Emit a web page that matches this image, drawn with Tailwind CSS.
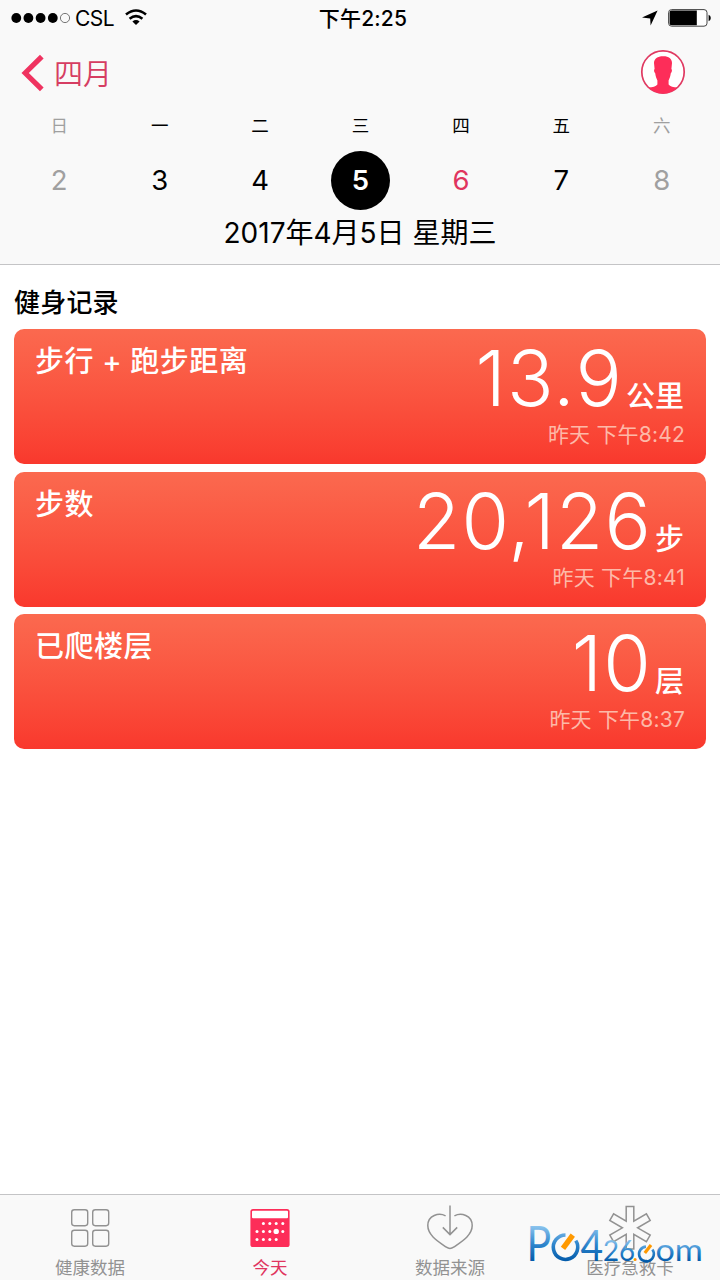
<!DOCTYPE html>
<html lang="zh-CN">
<head>
    <meta charset="UTF-8">
    <meta name="viewport" content="width=device-width, initial-scale=1.0">
    <title>健康</title>
    <script src="https://cdn.jsdelivr.net/npm/@tailwindcss/browser@4"></script>
</head>
<body class="bg-white font-['Inter','Noto_Sans_CJK_SC',sans-serif] text-black">
<div class="w-[720px] h-[1280px] flex flex-col overflow-hidden">

  <header class="h-[265px] bg-[#f9f9f9] border-b border-[#c4c4c6] flex flex-col shrink-0">
    <!-- status bar -->
    <div class="h-9 grid grid-cols-3 items-center pl-[11px] pr-[9px]">
      <div class="flex items-center">
        <svg class="w-[60px] h-3" viewBox="0 0 60 12">
          <circle cx="5.3" cy="6" r="4.9"/>
          <circle cx="17.4" cy="6" r="4.9"/>
          <circle cx="29.6" cy="6" r="4.9"/>
          <circle cx="41.8" cy="6" r="4.9"/>
          <circle cx="54" cy="6" r="4.6" fill="none" stroke="#555" stroke-width="0.8"/>
        </svg>
        <span class="text-[21px] leading-8 ml-1 pt-0.5 tracking-[-0.5px]">CSL</span>
        <svg class="w-[22px] h-4 ml-[11px] -mt-0.5" viewBox="0 0 22 16" fill="none" stroke="#000" stroke-width="2.6">
          <path d="M1 5.6 Q11 -2.6 21 5.6"/>
          <path d="M4.6 9.8 Q11 4.6 17.4 9.8"/>
          <path d="M7.4 12.4 Q11 9.6 14.6 12.4 L11 16 Z" fill="#000" stroke="none"/>
        </svg>
      </div>
      <div class="text-center text-[21px] leading-8 pt-px pl-1 font-medium tracking-[0.2px]">下午2:25</div>
      <div class="flex items-center justify-end">
        <svg class="w-4 h-4 mr-[10px]" viewBox="0 0 16 16"><path d="M15.6 0.4 L8.6 15.6 L8.2 8.6 L0 7.4 Z"/></svg>
        <svg class="w-[43px] h-[18px]" viewBox="0 0 43 18">
          <rect x="0.6" y="0.6" width="38.4" height="16.6" rx="3" fill="#fff" stroke="#444" stroke-width="1"/>
          <path d="M3.4 1.6 H28.8 V16.2 H3.4 Q1.6 16.2 1.6 14.4 V3.4 Q1.6 1.6 3.4 1.6 Z"/>
          <path d="M40.6 5.8 Q42.8 6.6 42.8 9 Q42.8 11.4 40.6 12.2 Z"/>
        </svg>
      </div>
    </div>

    <!-- nav bar -->
    <div class="h-[74px] flex items-center justify-between pl-[21px] pr-[34px]">
      <div class="flex items-center text-[#d63d62]">
        <svg class="w-[24px] h-[38px]" viewBox="0 0 24 38" fill="none" stroke="#ef3360" stroke-width="5.2"><path d="M20.8 2.6 L4.2 19 L20.8 35.4"/></svg>
        <span class="text-[29px] leading-10 ml-[9px] pt-[3px] font-[350]">四月</span>
      </div>
      <svg class="w-[46px] h-[46px] -mt-0.5" viewBox="0 0 46 46">
        <circle cx="23" cy="23" r="21.2" fill="#fff" stroke="#e03a62" stroke-width="1.7"/>
        <path fill="#fd2d59" d="M23 7.2 C28.4 7 32 9.6 32 14 L31.4 20 C32.4 20.6 32 23.6 30.8 24.2 C30.4 27.4 29.4 29.8 28.6 31.4 V35.4 C30 37.6 33.4 38 37.4 38.6 Q31 44.6 23 44.6 Q15 44.6 8.6 38.6 C12.6 38 16 37.6 17.4 35.4 V31.4 C16.6 29.8 15.6 27.4 15.2 24.2 C14 23.6 13.6 20.6 14.6 20 L14 14 C14 9.6 17.6 7.2 23 7.2 Z"/>
      </svg>
    </div>

    <!-- week -->
    <div class="grid grid-cols-7 pl-[9px] pr-[8px] text-center">
      <div class="text-[17.5px] leading-8 text-[#a0a0a0]">日</div>
      <div class="text-[17.5px] leading-8">一</div>
      <div class="text-[17.5px] leading-8">二</div>
      <div class="text-[17.5px] leading-8">三</div>
      <div class="text-[17.5px] leading-8">四</div>
      <div class="text-[17.5px] leading-8">五</div>
      <div class="text-[17.5px] leading-8 text-[#a0a0a0]">六</div>
    </div>
    <div class="grid grid-cols-7 pl-[9px] pr-[8px] mt-[9px] text-center text-[27.5px] leading-[58px]">
      <div class="text-[#a0a0a0]">2</div>
      <div>3</div>
      <div>4</div>
      <div class="w-[59px] h-[59px] rounded-full bg-black text-white font-semibold mx-auto">5</div>
      <div class="text-[#e0355f]">6</div>
      <div>7</div>
      <div class="text-[#a0a0a0]">8</div>
    </div>
    <div class="text-center text-[28px] leading-[46px]">2017年4月5日 星期三</div>
  </header>

  <main class="flex-1 px-[14px] pt-[18px]">
    <h1 class="text-[26px] leading-[40px] h-[38px] font-medium tracking-[0.2px]">健身记录</h1>
    <div class="flex flex-col gap-[7.5px] mt-2 text-white">

      <div class="h-[135px] rounded-[10px] bg-linear-to-b from-[#fb694f] to-[#f9382d] pl-[21px] pr-[21px] flex justify-between">
        <h2 class="text-[29px] leading-[42px] pt-[12px] font-medium tracking-[0.5px]">步行 + 跑步距离</h2>
        <div class="text-right">
          <div class="h-[91px] flex items-baseline justify-end">
            <span class="text-[77px] leading-[99px] font-light tracking-[1.2px]">13.9</span>
            <span class="relative top-px text-[29px] font-medium ml-[3px] mr-px">公里</span>
          </div>
          <p class="text-[21px] leading-[30px] text-[#fdb9a8] tracking-[0.2px]">昨天 下午8:42</p>
        </div>
      </div>

      <div class="h-[135px] rounded-[10px] bg-linear-to-b from-[#fb694f] to-[#f9382d] pl-[21px] pr-[21px] flex justify-between">
        <h2 class="text-[29px] leading-[42px] pt-[12px] font-medium tracking-[0.5px]">步数</h2>
        <div class="text-right">
          <div class="h-[91px] flex items-baseline justify-end">
            <span class="text-[77px] leading-[99px] font-light tracking-[1.2px]">20,126</span>
            <span class="relative top-px text-[29px] font-medium ml-[3px] mr-px">步</span>
          </div>
          <p class="text-[21px] leading-[30px] text-[#fdb9a8] tracking-[0.2px]">昨天 下午8:41</p>
        </div>
      </div>

      <div class="h-[135px] rounded-[10px] bg-linear-to-b from-[#fb694f] to-[#f9382d] pl-[21px] pr-[21px] flex justify-between">
        <h2 class="text-[29px] leading-[42px] pt-[12px] font-medium tracking-[0.5px]">已爬楼层</h2>
        <div class="text-right">
          <div class="h-[91px] flex items-baseline justify-end">
            <span class="text-[77px] leading-[99px] font-light tracking-[1.2px]">10</span>
            <span class="relative top-px text-[29px] font-medium ml-[3px] mr-px">层</span>
          </div>
          <p class="text-[21px] leading-[30px] text-[#fdb9a8] tracking-[0.2px]">昨天 下午8:37</p>
        </div>
      </div>

    </div>
  </main>

  <!-- tab bar -->
  <nav class="relative h-[86px] shrink-0 bg-[#f9f9f9] border-t border-[#c4c4c6] grid grid-cols-4 text-[17.5px] leading-6 text-[#929292]">
    <div class="flex flex-col items-center pt-[10px]">
      <svg class="w-[46px] h-[46px]" viewBox="0 0 46 46" fill="none" stroke="#929292" stroke-width="1.4">
        <rect x="4.7" y="4.7" width="16" height="16" rx="2.6"/>
        <rect x="25.7" y="4.7" width="16" height="16" rx="2.6"/>
        <rect x="4.7" y="25.2" width="16" height="16" rx="2.6"/>
        <rect x="25.7" y="25.2" width="16" height="16" rx="2.6"/>
      </svg>
      <span class="mt-[5px]">健康数据</span>
    </div>
    <div class="flex flex-col items-center pt-[10px] text-[#e0355f]">
      <svg class="w-[46px] h-[46px]" viewBox="0 0 46 46">
        <rect x="3.4" y="4" width="39.2" height="38" rx="2.6" fill="#fd2d59"/>
        <rect x="5" y="5.8" width="36" height="7.4" rx="1" fill="#fff"/>
        <g fill="#fff">
          <circle cx="16.4" cy="18.4" r="1.5"/><circle cx="22.8" cy="18.4" r="1.5"/><circle cx="29.2" cy="18.4" r="1.5"/><circle cx="35.8" cy="18.4" r="1.5"/>
          <circle cx="10" cy="26.4" r="1.5"/><circle cx="16.4" cy="26.4" r="1.5"/><circle cx="22.8" cy="26.4" r="1.5"/><circle cx="29.2" cy="26.4" r="2.7"/><circle cx="35.8" cy="26.4" r="1.5"/>
          <circle cx="10" cy="34.4" r="1.5"/><circle cx="16.4" cy="34.4" r="1.5"/><circle cx="22.8" cy="34.4" r="1.5"/><circle cx="29.2" cy="34.4" r="1.5"/>
        </g>
      </svg>
      <span class="mt-[5px]">今天</span>
    </div>
    <div class="flex flex-col items-center pt-[10px]">
      <svg class="w-[46px] h-[46px]" viewBox="0 0 46 46" fill="none" stroke="#929292" stroke-width="1.5">
        <path d="M18.6 10.8 C12 7.4 0.8 10 0.8 20.6 C0.8 30.4 11.4 36.6 19.4 42.2 Q23 44.8 26.6 42.2 C34.6 36.6 45.2 30.4 45.2 20.6 C45.2 10 34 7.4 27.4 10.8"/>
        <path d="M23 0.6 V29.4 M15.8 22.4 L23 29.6 L30.2 22.4"/>
      </svg>
      <span class="mt-[5px]">数据来源</span>
    </div>
    <div class="flex flex-col items-center pt-[10px]">
      <svg class="w-[46px] h-[46px]" viewBox="0 0 46 46" fill="none" stroke="#929292" stroke-width="1.5">
        <path d="M19.2 1.6 H26.8 V16.2 L39.4 8.9 L43.2 15.5 L30.6 22.8 L43.2 30.1 L39.4 36.7 L26.8 29.4 V44 H19.2 V29.4 L6.6 36.7 L2.8 30.1 L15.4 22.8 L2.8 15.5 L6.6 8.9 L19.2 16.2 Z"/>
      </svg>
      <span class="mt-[5px]">医疗急救卡</span>
    </div>

    <!-- watermark over the last tab -->
    <svg class="absolute left-[525px] top-[9px] w-[185px] h-[76px]" viewBox="0 -16 185 76" font-family="Lato, sans-serif">
      <defs>
        <linearGradient id="blue" gradientUnits="userSpaceOnUse" x1="0" y1="6" x2="0" y2="42">
          <stop offset="0" stop-color="#8cc4ee"/>
          <stop offset="0.5" stop-color="#2f86cd"/>
          <stop offset="1" stop-color="#0058a8"/>
        </linearGradient>
        <linearGradient id="blueSmall" gradientUnits="userSpaceOnUse" x1="0" y1="20" x2="0" y2="42">
          <stop offset="0" stop-color="#8cc4ee"/>
          <stop offset="0.5" stop-color="#2f86cd"/>
          <stop offset="1" stop-color="#0058a8"/>
        </linearGradient>
      </defs>
      <text x="1.6" y="41" font-size="48.5" textLength="24.6" lengthAdjust="spacingAndGlyphs" fill="url(#blue)">P</text>
      <text x="55.6" y="41" font-size="43" textLength="22.6" lengthAdjust="spacingAndGlyphs" fill="url(#blue)">4</text>
      <path d="M40.5 15 A12.2 12.2 0 1 0 50.8 20.6" fill="none" stroke="url(#blue)" stroke-width="3.6"/>
      <path d="M38 28.4 L47.8 15.2" stroke="#f90" stroke-width="5.4"/>
      <text x="78" y="41" font-size="28" textLength="32" lengthAdjust="spacingAndGlyphs" fill="url(#blueSmall)">26</text>
      <text x="107.4" y="41" font-size="24" fill="#f90">.</text>
      <path d="M121 26.6 A7.4 7.4 0 1 0 127.4 29.6" fill="none" stroke="url(#blueSmall)" stroke-width="2.6"/>
      <path d="M119.8 33 L126 25" stroke="#f90" stroke-width="3.2"/>
      <text x="130.4" y="41" font-size="31" textLength="47.4" lengthAdjust="spacingAndGlyphs" fill="url(#blueSmall)">om</text>
    </svg>
  </nav>
</div>
</body>
</html>
